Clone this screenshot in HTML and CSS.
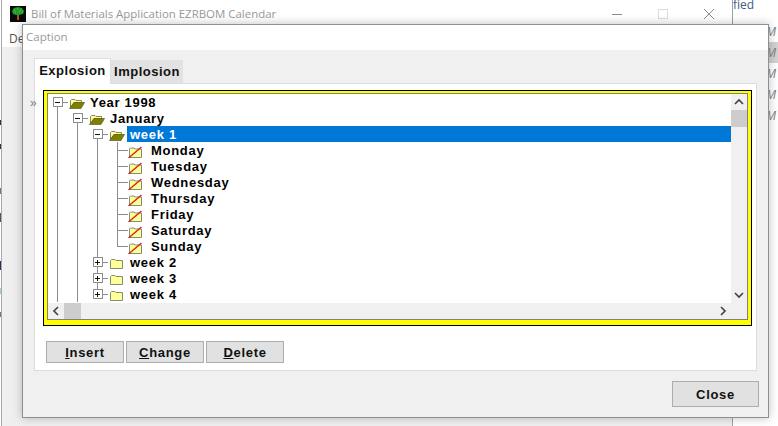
FILE: index.html
```html
<!DOCTYPE html>
<html lang="en">
<head>
    <meta charset="UTF-8">
    <meta name="viewport" content="width=device-width, initial-scale=1.0">
    <title>Bill of Materials Application EZRBOM Calendar</title>
    <link rel="stylesheet" href="styles.css">
</head>
<body>
<svg class="defs" width="0" height="0">
    <symbol id="folder-open" viewBox="0 0 16 16">
        <path d="M1.5 6.5 L2.5 5.5 H6 L7 6.5 H12.5 V8.5 H5 L1.5 14 Z" fill="#ffff99" stroke="#85855f"/>
        <path d="M5 8.5 H15.5 L12 14.5 H0.5 Z" fill="#808000" stroke="#5c5c20" stroke-width=".7"/>
    </symbol>
    <symbol id="folder" viewBox="0 0 16 16">
        <path d="M1.5 6.5 L2.5 5.5 H6 L7 6.5 H13.5 V14.5 H1.5 Z" fill="#ffff99" stroke="#8a8a70"/>
    </symbol>
    <symbol id="folder-off" viewBox="0 0 16 16">
        <path d="M1.5 7 L2.5 6 H6 L7 7 H13.5 V15.5 H1.5 Z" fill="#ffff99" stroke="#8a8a70"/>
        <path d="M0.5 16 L13.5 5" stroke="#d02018" stroke-width="1.3" fill="none"/>
    </symbol>
</svg>

<div class="desktop">
    <div class="side-note">fied</div>
    <div class="side-list">
        <div>M</div>
        <div class="side-hot">M</div>
        <div>M</div>
        <div>M</div>
        <div>M</div>
    </div>

    <div class="back-window">
        <div class="back-title">
            <svg class="app-icon" width="16" height="16" viewBox="0 0 16 16">
                <rect width="16" height="16" fill="#0a0a0a"/>
                <path d="M2 5 L4 2 L8 1 L12 2 L14 5 L13 8 L9 9 H6 L3 8 Z" fill="#1f9a2c"/>
                <path d="M4 4 h1 M7 3 h1 M10 4 h1 M5 6 h1 M9 6 h1 M12 6 h1" stroke="#5fdc50"/>
                <path d="M7 9 h2 v5 h-2 Z" fill="#b0541c"/>
            </svg>
            <span class="back-name">Bill of Materials Application EZRBOM Calendar</span>
            <span class="win-controls">
                <svg width="12" height="12" viewBox="0 0 12 12"><path d="M1 6.5 H11" stroke="#8c8c8c"/></svg>
                <svg width="12" height="12" viewBox="0 0 12 12"><rect x="1.5" y="1.5" width="9" height="9" fill="none" stroke="#dcdcdc"/></svg>
                <svg width="12" height="12" viewBox="0 0 12 12"><path d="M1 1 L11 11 M11 1 L1 11" stroke="#8c8c8c"/></svg>
            </span>
        </div>
        <div class="back-menu">De</div>
    </div>

    <div class="dialog">
        <div class="dialog-title">Caption</div>
        <div class="dialog-body">
            <div class="tabs">
                <div class="tab tab-active">Explosion</div>
                <div class="tab">Implosion</div>
            </div>
            <div class="panel">
                <span class="more">»</span>
                <div class="frame">
                    <div class="tree-box">
                        <div class="tree">
                            <div class="row">
                                <span class="cell box-minus"><i></i></span>
                                <svg class="icon"><use href="#folder-open"/></svg>
                                <span class="label">Year 1998</span>
                            </div>
                            <div class="row">
                                <span class="cell line"></span>
                                <span class="cell box-minus"><i></i></span>
                                <svg class="icon"><use href="#folder-open"/></svg>
                                <span class="label">January</span>
                            </div>
                            <div class="row">
                                <span class="cell line"></span><span class="cell line"></span>
                                <span class="cell box-minus"><i></i></span>
                                <svg class="icon"><use href="#folder-open"/></svg>
                                <span class="label selected">week 1</span>
                            </div>
                            <div class="row">
                                <span class="cell line"></span><span class="cell line"></span><span class="cell line"></span><span class="cell tee"></span>
                                <svg class="icon day-icon"><use href="#folder-off"/></svg>
                                <span class="label day">Monday</span>
                            </div>
                            <div class="row">
                                <span class="cell line"></span><span class="cell line"></span><span class="cell line"></span><span class="cell tee"></span>
                                <svg class="icon day-icon"><use href="#folder-off"/></svg>
                                <span class="label day">Tuesday</span>
                            </div>
                            <div class="row">
                                <span class="cell line"></span><span class="cell line"></span><span class="cell line"></span><span class="cell tee"></span>
                                <svg class="icon day-icon"><use href="#folder-off"/></svg>
                                <span class="label day">Wednesday</span>
                            </div>
                            <div class="row">
                                <span class="cell line"></span><span class="cell line"></span><span class="cell line"></span><span class="cell tee"></span>
                                <svg class="icon day-icon"><use href="#folder-off"/></svg>
                                <span class="label day">Thursday</span>
                            </div>
                            <div class="row">
                                <span class="cell line"></span><span class="cell line"></span><span class="cell line"></span><span class="cell tee"></span>
                                <svg class="icon day-icon"><use href="#folder-off"/></svg>
                                <span class="label day">Friday</span>
                            </div>
                            <div class="row">
                                <span class="cell line"></span><span class="cell line"></span><span class="cell line"></span><span class="cell tee"></span>
                                <svg class="icon day-icon"><use href="#folder-off"/></svg>
                                <span class="label day">Saturday</span>
                            </div>
                            <div class="row">
                                <span class="cell line"></span><span class="cell line"></span><span class="cell line"></span><span class="cell elbow"></span>
                                <svg class="icon day-icon"><use href="#folder-off"/></svg>
                                <span class="label day">Sunday</span>
                            </div>
                            <div class="row">
                                <span class="cell line"></span><span class="cell line"></span>
                                <span class="cell box-plus"><i></i></span>
                                <svg class="icon"><use href="#folder"/></svg>
                                <span class="label">week 2</span>
                            </div>
                            <div class="row">
                                <span class="cell line"></span><span class="cell line"></span>
                                <span class="cell box-plus"><i></i></span>
                                <svg class="icon"><use href="#folder"/></svg>
                                <span class="label">week 3</span>
                            </div>
                            <div class="row">
                                <span class="cell line"></span><span class="cell line"></span>
                                <span class="cell box-plus box-last"><i></i></span>
                                <svg class="icon"><use href="#folder"/></svg>
                                <span class="label">week 4</span>
                            </div>
                        </div>
                        <div class="vbar">
                            <span class="arrow"><svg width="10" height="8" viewBox="0 0 10 8"><path d="M1 6 L5 2 L9 6" fill="none" stroke="#404040" stroke-width="1.6"/></svg></span>
                            <span class="thumb-v"></span>
                            <span class="grow"></span>
                            <span class="arrow"><svg width="10" height="8" viewBox="0 0 10 8"><path d="M1 2 L5 6 L9 2" fill="none" stroke="#404040" stroke-width="1.6"/></svg></span>
                        </div>
                        <div class="hbar">
                            <span class="arrow"><svg width="8" height="10" viewBox="0 0 8 10"><path d="M6 1 L2 5 L6 9" fill="none" stroke="#404040" stroke-width="1.6"/></svg></span>
                            <span class="thumb-h"></span>
                            <span class="grow"></span>
                            <span class="arrow"><svg width="8" height="10" viewBox="0 0 8 10"><path d="M2 1 L6 5 L2 9" fill="none" stroke="#404040" stroke-width="1.6"/></svg></span>
                        </div>
                        <div class="corner"></div>
                    </div>
                </div>
                <div class="actions">
                    <button class="btn" type="button"><u>I</u>nsert</button>
                    <button class="btn" type="button"><u>C</u>hange</button>
                    <button class="btn" type="button"><u>D</u>elete</button>
                </div>
            </div>
            <div class="footer">
                <button class="btn btn-close" type="button">Close</button>
            </div>
        </div>
    </div>
</div>
</body>
</html>
```

FILE: styles.css
```css
* {
    box-sizing: border-box;
}

html, body {
    margin: 0;
    height: 100%;
}

body {
    overflow: hidden;
    background: #fff;
    font-family: "Liberation Sans", Arial, sans-serif;
}

.defs {
    position: absolute;
}

/* the specks on the left edge are the window behind the back window */
.desktop {
    position: relative;
    width: 778px;
    height: 426px;
    overflow: hidden;
    background:
        linear-gradient(#3a2a5a, #3a2a5a) 0 120px / 1px 5px no-repeat,
        linear-gradient(#3a2a5a, #3a2a5a) 0 144px / 1px 5px no-repeat,
        linear-gradient(#777, #777) 0 188px / 1px 6px no-repeat,
        linear-gradient(#555, #555) 0 213px / 1px 9px no-repeat,
        linear-gradient(#3a2a5a, #3a2a5a) 0 261px / 1px 9px no-repeat,
        linear-gradient(#a8d0c8, #a8d0c8) 0 288px / 1px 6px no-repeat,
        linear-gradient(#777, #777) 0 312px / 1px 5px no-repeat,
        #fff;
}

/* things peeking out behind the windows */
.side-note {
    position: absolute;
    left: 733px;
    top: -4px;
    font-family: "Open Sans", sans-serif;
    font-size: 12px;
    color: #3d5a80;
}

.side-list {
    position: absolute;
    left: 769px;
    top: 21px;
    width: 9px;
    overflow: hidden;
    font-family: "Open Sans", sans-serif;
    font-size: 12px;
    font-style: italic;
    color: #808080;
}

.side-list div {
    height: 21px;
    line-height: 21px;
    text-indent: -3px;
}

.side-hot {
    background: #d2d2d2;
}

.back-window {
    position: absolute;
    left: 1px;
    top: 0;
    width: 732px;
    height: 426px;
    background: #efefef;
    border-left: 1px solid #a8a8a8;
    border-right: 1px solid #a0a0a0;
}

.back-title {
    display: flex;
    align-items: center;
    height: 27px;
    padding-left: 8px;
    background: #fff;
}

.app-icon {
    flex: none;
}

.back-name {
    margin-left: 5px;
    font-family: "Open Sans", sans-serif;
    font-size: 11.45px;
    color: #999;
}

.win-controls {
    display: flex;
    gap: 34px;
    margin-left: auto;
    margin-right: 17px;
}

.back-menu {
    height: 20px;
    padding-left: 7px;
    background: #fff;
    font-family: "Open Sans", sans-serif;
    font-size: 12px;
    line-height: 24px;
    color: #555;
}

.dialog {
    position: absolute;
    left: 22px;
    top: 24px;
    width: 747px;
    height: 394px;
    background: #f0f0f0;
    border: 1px solid #8f8f8f;
    box-shadow: 0 0 9px rgba(0, 0, 0, 0.25);
}

.dialog-title {
    height: 25px;
    padding-left: 3px;
    background: #fff;
    font-family: "Open Sans", sans-serif;
    font-size: 11.5px;
    line-height: 24px;
    color: #9a9a9a;
}

.dialog-body {
    padding: 8px 9px 0 11px;
}

.tabs {
    display: flex;
    align-items: flex-end;
    height: 25px;
}

.tab {
    width: 72px;
    height: 23px;
    background: #e2e2e2;
    font-size: 13px;
    font-weight: bold;
    letter-spacing: 0.5px;
    line-height: 24px;
    text-align: center;
    color: #111;
}

.tab-active {
    position: relative;
    z-index: 1;
    width: 77px;
    height: 26px;
    margin-bottom: -1px;
    background: #fff;
    border: 1px solid #dedede;
    border-bottom: 0;
    line-height: 24px;
}

.panel {
    position: relative;
    width: 723px;
    height: 288px;
    padding: 6px 8px;
    background: #fff;
    border: 1px solid #dcdcdc;
}

.more {
    position: absolute;
    left: -5px;
    top: 11px;
    font-size: 12px;
    line-height: 16px;
    color: #808080;
}

.frame {
    width: 709px;
    height: 236px;
    padding: 2px 3px 5px;
    background: #ffff00;
    border: 1px solid #000;
}

.tree-box {
    display: grid;
    grid-template-columns: 683px 16px;
    grid-template-rows: 209px 16px;
    height: 100%;
    background: #fff;
    border: 1px solid #808080;
}

.tree {
    overflow: hidden;
}

.row {
    display: flex;
    height: 16px;
}

.cell {
    flex: none;
    width: 20px;
    height: 16px;
    padding: 3px 0 0 5px;
    background-repeat: no-repeat;
}

.line {
    background-image: linear-gradient(#8c8c8c, #8c8c8c);
    background-position: 9px 0;
    background-size: 1px 100%;
}

.tee {
    background-image: linear-gradient(#8c8c8c, #8c8c8c), linear-gradient(#8c8c8c, #8c8c8c);
    background-position: 9px 0, 9px 8px;
    background-size: 1px 100%, 11px 1px;
}

.elbow {
    background-image: linear-gradient(#8c8c8c, #8c8c8c), linear-gradient(#8c8c8c, #8c8c8c);
    background-position: 9px 0, 9px 8px;
    background-size: 1px 9px, 11px 1px;
}

/* stub to the folder plus the line running on below the box */
.box-minus {
    background-image: linear-gradient(#8c8c8c, #8c8c8c), linear-gradient(#8c8c8c, #8c8c8c);
    background-position: 14px 8px, 9px 12px;
    background-size: 6px 1px, 1px 4px;
}

.box-plus {
    background-image: linear-gradient(#8c8c8c, #8c8c8c), linear-gradient(#8c8c8c, #8c8c8c);
    background-position: 14px 8px, 9px 0;
    background-size: 6px 1px, 1px 100%;
}

.box-last {
    background-size: 6px 1px, 1px 4px;
}

.cell i {
    display: block;
    width: 10px;
    height: 10px;
    border: 1px solid #8c8c8c;
    background: linear-gradient(#111, #111) 1px 4px / 5px 1px no-repeat #fff;
}

.box-plus i {
    background:
        linear-gradient(#111, #111) 1px 4px / 5px 1px no-repeat,
        linear-gradient(#111, #111) 3px 2px / 1px 5px no-repeat,
        #fff;
}

.icon {
    flex: none;
    width: 16px;
    height: 16px;
    margin-left: 1px;
}

.day-icon {
    margin-left: 0;
}

.label {
    height: 16px;
    margin-left: 2px;
    padding: 0 3px;
    font-size: 13px;
    font-weight: bold;
    letter-spacing: 0.7px;
    line-height: 17px;
    white-space: nowrap;
    color: #000;
}

.day {
    margin-left: 4px;
}

.selected {
    flex: 1;
    background: #0078d7;
    color: #fff;
}

.vbar,
.hbar {
    display: flex;
    background: #f0f0f0;
}

.vbar {
    flex-direction: column;
}

.grow {
    flex: 1;
}

.arrow {
    display: flex;
    flex: none;
    align-items: center;
    justify-content: center;
    width: 16px;
    height: 16px;
}

.thumb-v {
    height: 17px;
    background: #cdcdcd;
}

.thumb-h {
    width: 17px;
    background: #cdcdcd;
}

.corner {
    background: #f0f0f0;
}

.actions {
    display: flex;
    gap: 2px;
    margin: 15px 0 0 3px;
}

.btn {
    width: 78px;
    height: 22px;
    padding: 0;
    background: #e1e1e1;
    border: 1px solid #adadad;
    font-family: inherit;
    font-size: 13px;
    font-weight: bold;
    letter-spacing: 0.7px;
    color: #111;
}

.footer {
    display: flex;
    justify-content: flex-end;
    margin-top: 10px;
}

.btn-close {
    width: 87px;
    height: 26px;
}
```
